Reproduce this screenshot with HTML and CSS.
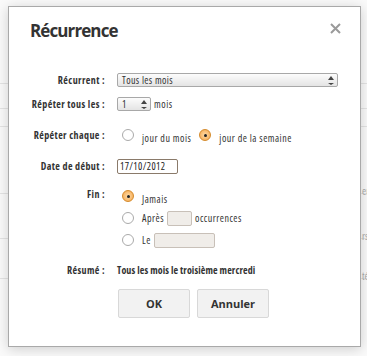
FILE: index.html
```html
<!DOCTYPE html>
<html lang="fr">
<head>
    <meta charset="UTF-8">
    <title>Récurrence</title>
    <link rel="stylesheet" href="styles.css">
</head>
<body>

    <!-- page behind the dialog -->
    <div class="page">
        <div class="row"></div>
        <div class="row r2"></div>
        <div class="row r3"></div>
        <div class="row r4"><span>en</span></div>
        <div class="row r5"><span>rs</span></div>
        <div class="row r6"><span>té</span></div>
    </div>

    <div class="dialog">
        <div class="head">
            <h2>Récurrence</h2>
            <svg class="close" width="11" height="11" viewBox="0 0 11 11">
                <path d="M1 1 L10 10 M10 1 L1 10" stroke="#9a9a9a" stroke-width="2"/>
            </svg>
        </div>

        <div class="form">
            <label class="lbl">Récurrent :</label>
            <div class="cell">
                <div class="select">
                    <span>Tous les mois</span>
                    <span class="arrows"><i class="up"></i><i class="down"></i></span>
                </div>
            </div>

            <label class="lbl">Répéter tous les :</label>
            <div class="line">
                <div class="select spin">
                    <span>1</span>
                    <span class="arrows"><i class="up"></i><i class="down"></i></span>
                </div>
                <span class="txt">mois</span>
            </div>

            <label class="lbl">Répéter chaque :</label>
            <div class="line">
                <span class="radio"></span><span class="txt low">jour du mois</span>
                <span class="radio on"></span><span class="txt low">jour de la semaine</span>
            </div>

            <label class="lbl">Date de début :</label>
            <div class="line">
                <input type="text" class="date" value="17/10/2012">
            </div>

            <label class="lbl">Fin :</label>
            <div class="ends">
                <div class="line">
                    <span class="radio on"></span><span class="txt low">Jamais</span>
                </div>
                <div class="line">
                    <span class="radio"></span><span class="txt">Après</span>
                    <span class="box small"></span><span class="txt">occurrences</span>
                </div>
                <div class="line">
                    <span class="radio"></span><span class="txt">Le</span>
                    <span class="box wide"></span>
                </div>
            </div>

            <label class="lbl">Résumé :</label>
            <div class="summary">Tous les mois le troisième mercredi</div>
        </div>

        <div class="buttons">
            <button class="btn">OK</button>
            <button class="btn">Annuler</button>
        </div>
    </div>

</body>
</html>
```
FILE: styles.css
```css
* {
    font-family: 'Open Sans', Roboto, sans-serif;
    font-stretch: 75%;
    box-sizing: border-box;
}

body {
    margin: 0;
    width: 367px;
    height: 356px;
    overflow: hidden;
    background: #fafafa;
    position: relative;
}

.page {
    padding-top: 83px;
}

.row {
    height: 25px;
    border-top: 1px solid #e4e4e4;
    position: relative;
}
.r2 { height: 18px; }
.r3 { height: 67px; }
.r4 { height: 45px; }
.r5 { height: 40px; }

.row span {
    position: absolute;
    left: 362px;
    top: -10px;
    font-size: 10px;
    color: #aaa;
}

.dialog {
    position: absolute;
    left: 8px;
    top: 6px;
    width: 353px;
    height: 341px;
    background: #fff;
    border: 1px solid #a9a9a9;
    box-shadow: 0 2px 12px rgba(0, 0, 0, 0.18);
}

.head {
    display: flex;
    justify-content: space-between;
    align-items: flex-start;
    padding: 12px 19px 0 21px;
}

h2 {
    margin: 0;
    font-size: 17px;
    font-stretch: 92%;
    letter-spacing: -0.9px;
    font-weight: bold;
    color: #333;
}

.close {
    margin-top: 4px;
}

.form {
    display: grid;
    grid-template-columns: 88px 1fr;
    grid-template-rows: 24px 31px 31px 28px 76px auto;
    column-gap: 12px;
    margin-top: 31px;
    padding-left: 8px;
    padding-right: 22px;
    font-size: 10px;
    color: #333;
}

.lbl {
    text-align: right;
    font-weight: bold;
    font-size: 10px;
    letter-spacing: 0.4px;
    line-height: 14px;
    white-space: nowrap;
    color: #333;
}

.select {
    display: flex;
    justify-content: space-between;
    align-items: center;
    height: 14px;
    padding: 0 3px 0 4px;
    border: 1px solid #a8a8a8;
    border-radius: 2px;
    background: linear-gradient(#fcfcfc, #e4e4e4);
    font-size: 10px;
    letter-spacing: 0.4px;
}

.arrows {
    display: flex;
    flex-direction: column;
    gap: 3px;
}

.arrows i {
    width: 0;
    height: 0;
    border-left: 3px solid transparent;
    border-right: 3px solid transparent;
}
.arrows .up { border-bottom: 4px solid #444; }
.arrows .down { border-top: 2px solid #444; }

.spin {
    width: 34px;
}

.line {
    display: flex;
    align-items: center;
    gap: 3px;
    height: 14px;
}

.txt {
    font-size: 10px;
    letter-spacing: 0.5px;
    color: #333;
}

.low {
    margin-top: 6px;
}

.radio {
    flex: none;
    width: 12px;
    height: 12px;
    margin: 0 5px 0 5px;
    border: 1px solid #aaa;
    border-radius: 50%;
    background: #fff;
    position: relative;
}

.radio.on {
    border-color: #d58a2a;
    background: radial-gradient(#ffdca8, #f3a449);
}

.radio.on::after {
    content: "";
    position: absolute;
    left: 3.5px;
    top: 3.5px;
    width: 3px;
    height: 3px;
    border-radius: 50%;
    background: #222;
}

.date {
    width: 61px;
    height: 15px;
    padding: 0 2px;
    border: 1px solid #8a7a6a;
    border-radius: 2px;
    font-size: 10px;
    letter-spacing: 0.4px;
    color: #222;
    outline: none;
}

.ends {
    display: flex;
    flex-direction: column;
    gap: 8px;
    padding-top: 2px;
}

.box {
    display: inline-block;
    height: 15px;
    border: 1px solid #c8c0b8;
    border-radius: 2px;
    background: #f0ede9;
}
.small { width: 25px; }
.wide { width: 61px; }

.summary {
    font-weight: bold;
    font-size: 10px;
    letter-spacing: 0.1px;
    line-height: 14px;
}

.buttons {
    display: flex;
    gap: 7px;
    padding-left: 109px;
    margin-top: 12px;
}

.btn {
    width: 72px;
    height: 29px;
    border: 1px solid #d8d8d8;
    border-radius: 2px;
    background: #f2f2f2;
    font-weight: bold;
    font-size: 11px;
    font-stretch: 100%;
    color: #333;
}
```
